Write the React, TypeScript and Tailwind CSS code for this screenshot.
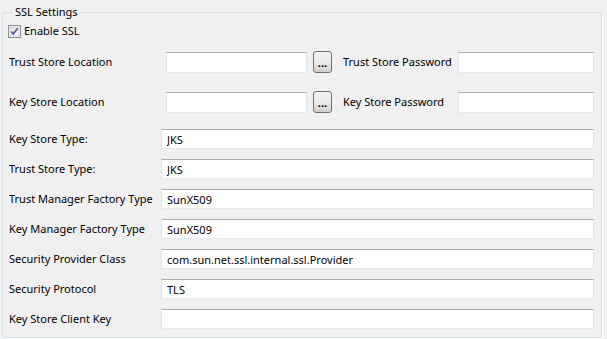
import React from 'react';

const font = { fontFamily: '"Segoe UI", "Noto Sans", sans-serif' };

function TextField({ value = '', className = '' }: { value?: string; className?: string }) {
  return (
    <input
      readOnly
      value={value}
      className={`bg-white border border-[#e2e3ea] border-t-[#abadb3] border-b-[#e3e9ef] px-[5px] text-[11px] text-black outline-none ${className}`}
    />
  );
}

function BrowseButton() {
  return (
    <button className="w-[19px] h-[22px] ml-[6px] rounded-[3px] border border-[#707070] bg-gradient-to-b from-[#f2f2f2] via-[#ebebeb] to-[#cfcfcf] flex items-end justify-center pb-[4px] text-[11px] leading-none font-bold text-black">
      ...
    </button>
  );
}

function Checkbox() {
  return (
    <svg width="13" height="13" viewBox="0 0 13 13">
      <defs>
        <linearGradient id="cb" x1="0" y1="0" x2="1" y2="1">
          <stop offset="0" stopColor="#dcdcdc" />
          <stop offset="1" stopColor="#fbfbfb" />
        </linearGradient>
      </defs>
      <rect x="0.5" y="0.5" width="12" height="12" fill="#fff" stroke="#8e8f8f" />
      <rect x="2" y="2" width="9" height="9" fill="url(#cb)" stroke="#aeb3b9" strokeWidth="0.5" />
      <path d="M3.2 6.6 L5.2 9 L9.8 3.2" fill="none" stroke="#4a5f97" strokeWidth="1.6" />
    </svg>
  );
}

const rows: { label: string; value: string }[] = [
  { label: 'Key Store Type:', value: 'JKS' },
  { label: 'Trust Store Type:', value: 'JKS' },
  { label: 'Trust Manager Factory Type', value: 'SunX509' },
  { label: 'Key Manager Factory Type', value: 'SunX509' },
  { label: 'Security Provider Class', value: 'com.sun.net.ssl.internal.ssl.Provider' },
  { label: 'Security Protocol', value: 'TLS' },
  { label: 'Key Store Client Key', value: '' },
];

export default function App() {
  return (
    <div className="w-[607px] h-[339px] bg-[#f0f0f0] text-[11px] text-black overflow-hidden" style={font}>
      <fieldset className="ml-[2px] mt-[4px] w-[600px] border border-[#d5dfe5] rounded-[3px] shadow-[1px_1px_0_#ffffff] pl-[6px] pb-[8px]">
        <legend className="ml-[4px] px-[2px] leading-[16px]">SSL Settings</legend>

        <label className="flex items-center h-[16px] mt-[3px] -ml-[1px] gap-[3px]">
          <Checkbox />
          <span>Enable SSL</span>
        </label>

        <div className="flex items-center h-[22px] mt-[12px]">
          <span className="w-[157px]">Trust Store Location</span>
          <TextField className="w-[141px] h-[21px]" />
          <BrowseButton />
          <span className="w-[115px] ml-[11px]">Trust Store Password</span>
          <TextField className="w-[136px] h-[21px]" />
        </div>

        <div className="flex items-center h-[22px] mt-[18px]">
          <span className="w-[157px]">Key Store Location</span>
          <TextField className="w-[141px] h-[21px]" />
          <BrowseButton />
          <span className="w-[115px] ml-[11px]">Key Store Password</span>
          <TextField className="w-[136px] h-[21px]" />
        </div>

        <div className="flex flex-col gap-[10px] mt-[16px]">
          {rows.map((r) => (
            <div key={r.label} className="flex items-center h-[20px]">
              <span className="w-[152px]">{r.label}</span>
              <TextField value={r.value} className="w-[433px] h-[20px]" />
            </div>
          ))}
        </div>
      </fieldset>
    </div>
  );
}
